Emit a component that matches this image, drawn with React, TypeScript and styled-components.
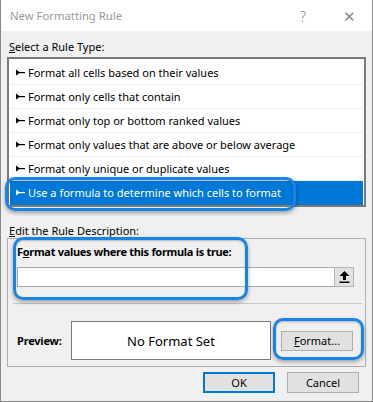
import React from "react";
import styled, { createGlobalStyle } from "styled-components";

const GlobalStyle = createGlobalStyle`
  html, body {
    margin: 0;
    padding: 0;
    background: #f0f0f0;
  }
  body {
    font-family: "Noto Sans", "Open Sans", sans-serif;
    font-size: 11px;
    color: #000;
  }
`;

const Dialog = styled.div`
  position: relative;
  width: 373px;
  height: 402px;
  box-sizing: border-box;
  background: #f0f0f0;
  border: 1px solid #888;
  border-top: none;
  overflow: hidden;
  display: flex;
  flex-direction: column;
`;

const TitleBar = styled.div`
  height: 31px;
  background: #fff;
  display: flex;
  align-items: center;
  padding-left: 9px;
  color: #9a9a9a;
  font-size: 11.3px;
`;

const Title = styled.div`
  flex: 1;
`;

const TitleButton = styled.div<{ $w: number }>`
  width: ${(p) => p.$w}px;
  text-align: center;
  color: #8a8a8a;
  font-size: 15px;
  font-weight: 300;
`;

const Body = styled.div`
  padding: 0 6px;
  display: flex;
  flex-direction: column;
`;

const SectionLabel = styled.div`
  height: 26px;
  box-sizing: border-box;
  padding: 8px 0 0 2px;
  line-height: 15px;
`;

const RuleList = styled.div`
  background: #fff;
  border: 2px solid #7a7a7a;
  padding: 2px 1px 0 1px;
  height: 144px;
  display: flex;
  flex-direction: column;
`;

const RuleRow = styled.div<{ $selected?: boolean }>`
  height: 24px;
  display: flex;
  align-items: center;
  padding-left: 6px;
  gap: 3px;
  box-sizing: border-box;
  background: ${(p) => (p.$selected ? "#0078d7" : "#fff")};
  color: ${(p) => (p.$selected ? "#fff" : "#000")};
  border-bottom: 1px solid ${(p) => (p.$selected ? "#0078d7" : "#f0f0f0")};
`;

const Tack = ({ color }: { color: string }) => (
  <svg width="9" height="7" viewBox="0 0 9 7">
    <polygon points="0,0.5 0,6.5 4,3.5" fill={color} />
    <rect x="2" y="3" width="7" height="1.2" fill={color} />
  </svg>
);

const DescLabel = styled(SectionLabel)`
  height: 31px;
  padding-top: 16px;
`;

const DescBox = styled.div`
  border: 1px solid #adadad;
  height: 129px;
  box-sizing: border-box;
  padding: 0 4px 0 9px;
  display: flex;
  flex-direction: column;
`;

const BoldLabel = styled.div`
  font-weight: bold;
  letter-spacing: -0.3px;
  height: 28px;
  line-height: 26px;
`;

const FormulaRow = styled.div`
  display: flex;
  height: 20px;
  margin-right: 7px;
  box-sizing: border-box;
  border: 1px solid #aaa;
  background: #fff;
`;

const FormulaInput = styled.div`
  flex: 1;
`;

const RefButton = styled.div`
  width: 20px;
  box-sizing: border-box;
  border: 1px solid #b5b5b5;
  background: #e1e1e1;
  display: flex;
  align-items: center;
  justify-content: center;
  margin: -1px -1px -1px 0;
  height: 20px;
`;

const Separator = styled.div`
  height: 1px;
  background: #c8c8c8;
  margin: 16px -1px 0 -4px;
`;

const PreviewRow = styled.div`
  display: flex;
  align-items: center;
  margin-top: 17px;
  padding-right: 8px;
`;

const PreviewLabel = styled.div`
  font-weight: bold;
  letter-spacing: -0.2px;
  width: 54px;
  flex-shrink: 0;
`;

const PreviewBox = styled.div`
  width: 200px;
  flex-shrink: 0;
  height: 39px;
  box-sizing: border-box;
  border: 1px solid #7a7a7a;
  background: #fff;
  display: flex;
  align-items: center;
  justify-content: center;
  font-size: 13px;
`;

const Button = styled.button<{ $primary?: boolean }>`
  font-family: inherit;
  font-size: 11px;
  color: #000;
  height: 21px;
  width: 72px;
  flex-shrink: 0;
  padding: 0;
  box-sizing: border-box;
  background: #e1e1e1;
  border: ${(p) => (p.$primary ? "2px solid #0078d7" : "1px solid #adadad")};
`;

const FormatButton = styled(Button)`
  margin-left: auto;
  height: 20px;
`;

const Footer = styled.div`
  display: flex;
  justify-content: flex-end;
  gap: 12px;
  padding: 5px 7px 0 0;
`;

const Highlight = styled.div<{ $x: number; $y: number; $w: number; $h: number }>`
  position: absolute;
  left: ${(p) => p.$x}px;
  top: ${(p) => p.$y}px;
  width: ${(p) => p.$w}px;
  height: ${(p) => p.$h}px;
  box-sizing: border-box;
  border: 3px solid #1a83e6;
  border-radius: 10px;
  box-shadow: 0 2px 4px rgba(0, 0, 0, 0.35), inset 0 1px 2px rgba(0, 0, 0, 0.25);
  pointer-events: none;
`;

const rules = [
  "Format all cells based on their values",
  "Format only cells that contain",
  "Format only top or bottom ranked values",
  "Format only values that are above or below average",
  "Format only unique or duplicate values",
  "Use a formula to determine which cells to format",
];

export default function App() {
  return (
    <>
      <GlobalStyle />
      <Dialog>
        <TitleBar>
          <Title>New Formatting Rule</Title>
          <TitleButton $w={46}>?</TitleButton>
          <TitleButton $w={46}>✕</TitleButton>
        </TitleBar>
        <Body>
          <SectionLabel>
            <u>S</u>elect a Rule Type:
          </SectionLabel>
          <RuleList>
            {rules.map((r, i) => {
              const sel = i === rules.length - 1;
              return (
                <RuleRow key={r} $selected={sel}>
                  <Tack color={sel ? "#fff" : "#000"} />
                  {r}
                </RuleRow>
              );
            })}
          </RuleList>
          <DescLabel>
            <u>E</u>dit the Rule Description:
          </DescLabel>
          <DescBox>
            <BoldLabel>
              F<u>o</u>rmat values where this formula is true:
            </BoldLabel>
            <FormulaRow>
              <FormulaInput />
              <RefButton>
                <svg width="11" height="12" viewBox="0 0 11 12">
                  <polygon points="5.5,0 10.5,5 7,5 7,9 4,9 4,5 0.5,5" fill="#000" />
                  <rect x="0.5" y="10.5" width="10" height="1.5" fill="#000" />
                </svg>
              </RefButton>
            </FormulaRow>
            <Separator />
            <PreviewRow>
              <PreviewLabel>Preview:</PreviewLabel>
              <PreviewBox>No Format Set</PreviewBox>
              <FormatButton>
                <u>F</u>ormat...
              </FormatButton>
            </PreviewRow>
          </DescBox>
          <Footer>
            <Button $primary>OK</Button>
            <Button>Cancel</Button>
          </Footer>
        </Body>
        <Highlight $x={4} $y={177} $w={291} $h={34} />
        <Highlight $x={12} $y={237} $w={235} $h={63} />
        <Highlight $x={272} $y={318} $w={91} $h={42} />
      </Dialog>
    </>
  );
}
